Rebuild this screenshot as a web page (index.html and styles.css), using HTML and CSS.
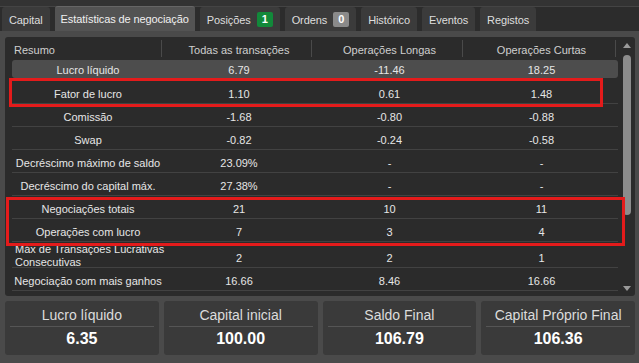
FILE: index.html
```html
<!DOCTYPE html>
<html lang="pt">
<head>
  <meta charset="UTF-8" />
  <title>Relatório – Estatísticas de negociação</title>
  <meta name="viewport" content="width=device-width, initial-scale=1" />
  <link rel="stylesheet" href="styles.css">
</head>
<body>
  <div class="topbar"></div>

  <nav class="tabs">
    <div class="tab">Capital</div>
    <div class="tab active">Estatísticas de negociação</div>
    <div class="tab">Posições <span class="badge green">1</span></div>
    <div class="tab">Ordens <span class="badge gray">0</span></div>
    <div class="tab">Histórico</div>
    <div class="tab">Eventos</div>
    <div class="tab">Registos</div>
  </nav>

  <main class="content">
    <section class="panel">
      <div class="table">
        <div class="row head">
          <div class="cell left">Resumo</div>
          <div class="cell">Todas as transações</div>
          <div class="cell">Operações Longas</div>
          <div class="cell">Operações Curtas</div>
        </div>
        <div class="row hl">
          <div class="cell">Lucro líquido</div><div class="cell">6.79</div><div class="cell">-11.46</div><div class="cell">18.25</div>
        </div>
        <div class="row">
          <div class="cell">Fator de lucro</div><div class="cell">1.10</div><div class="cell">0.61</div><div class="cell">1.48</div>
        </div>
        <div class="row">
          <div class="cell">Comissão</div><div class="cell">-1.68</div><div class="cell">-0.80</div><div class="cell">-0.88</div>
        </div>
        <div class="row">
          <div class="cell">Swap</div><div class="cell">-0.82</div><div class="cell">-0.24</div><div class="cell">-0.58</div>
        </div>
        <div class="row">
          <div class="cell">Decréscimo máximo de saldo</div><div class="cell">23.09%</div><div class="cell">-</div><div class="cell">-</div>
        </div>
        <div class="row">
          <div class="cell">Decréscimo do capital máx.</div><div class="cell">27.38%</div><div class="cell">-</div><div class="cell">-</div>
        </div>
        <div class="row">
          <div class="cell">Negociações totais</div><div class="cell">21</div><div class="cell">10</div><div class="cell">11</div>
        </div>
        <div class="row">
          <div class="cell">Operações com lucro</div><div class="cell">7</div><div class="cell">3</div><div class="cell">4</div>
        </div>
        <div class="row tall">
          <div class="cell left">Máx de Transações Lucrativas Consecutivas</div><div class="cell">2</div><div class="cell">2</div><div class="cell">1</div>
        </div>
        <div class="row">
          <div class="cell">Negociação com mais ganhos</div><div class="cell">16.66</div><div class="cell">8.46</div><div class="cell">16.66</div>
        </div>
      </div>

      <div class="scrollbar">
        <span class="arrow up"></span>
        <span class="thumb"></span>
        <span class="arrow down"></span>
      </div>

      <!-- marcações a vermelho -->
      <div class="mark mark-a"></div>
      <div class="mark mark-b"></div>
    </section>

    <section class="cards">
      <div class="card"><span class="label">Lucro líquido</span><strong>6.35</strong></div>
      <div class="card"><span class="label">Capital inicial</span><strong>100.00</strong></div>
      <div class="card"><span class="label">Saldo Final</span><strong>106.79</strong></div>
      <div class="card"><span class="label">Capital Próprio Final</span><strong>106.36</strong></div>
    </section>
  </main>
</body>
</html>
```

FILE: styles.css
```css
body {
  font-family: 'Liberation Sans', Arial, sans-serif;
  margin: 0;
  background: #4a4a4a;
  color: #e6e6e6;
  width: 639px;
  height: 363px;
  overflow: hidden;
}
.topbar {
  height: 6px;
  background: #333;
  border-bottom: 1px solid #444;
}
.tabs {
  display: flex;
  gap: 5px;
  height: 24px;
  padding-left: 2px;
  background: #2c2c2c;
  align-items: flex-end;
}
.tab {
  display: flex;
  align-items: center;
  gap: 6px;
  height: 24px;
  padding: 1px 7px 0;
  background: #3b3b3b;
  border-radius: 3px 3px 0 0;
  font-size: 11px;
  letter-spacing: -0.1px;
  color: #dedede;
  box-sizing: border-box;
}
.tab.active {
  background: #535353;
  height: 25px;
  border-top: 1px solid #666;
  padding: 0 6px;
  color: #f0f0f0;
}
.badge {
  display: inline-block;
  width: 16px;
  height: 15px;
  line-height: 15px;
  text-align: center;
  border-radius: 2px;
  font-size: 11px;
  font-weight: bold;
  color: #fff;
}
.badge.green {
  background: #12893a;
}
.badge.gray {
  background: #8a8a8a;
}
.content {
  padding: 6px 4px 0 5px;
}
.panel {
  position: relative;
  display: flex;
  height: 259px;
  background: #2b2b2b;
  border-radius: 3px;
  padding-left: 7px;
  box-sizing: border-box;
}
.table {
  width: 606px;
}
.row {
  display: grid;
  grid-template-columns: 152px 150px 151px 153px;
  height: 23px;
  align-items: center;
  border-bottom: 1px solid #424242;
  box-sizing: border-box;
  font-size: 11px;
}
.row.head {
  height: 21px;
  margin-bottom: 2px;
  border-bottom: none;
  color: #cfcfcf;
}
.row.head .cell {
  position: relative;
}
.row.head .cell + .cell::before {
  content: '';
  position: absolute;
  left: -3px;
  top: 0;
  height: 17px;
  border-left: 1px solid #4a4a4a;
}
.row.head .cell:last-child::after {
  content: '';
  position: absolute;
  right: 2px;
  top: 0;
  height: 17px;
  border-left: 1px solid #4a4a4a;
}
.row.hl {
  height: 18px;
  margin: 2px 0 3px;
  background: #4d4d4d;
  border-radius: 3px;
  border-bottom: none;
}
.row.hl .cell {
  padding-top: 2px;
}
.row.tall {
  height: 26px;
}
.cell {
  text-align: center;
  white-space: nowrap;
  padding-top: 4px;
}
.cell.left {
  text-align: left;
  padding-left: 2px;
}
.row.tall .cell.left {
  align-self: start;
  white-space: normal;
  line-height: 13px;
  padding: 1px 0 0 3px;
  width: 150px;
}
.scrollbar {
  width: 17px;
  display: flex;
  flex-direction: column;
  align-items: center;
  padding: 6px 0 5px;
  box-sizing: border-box;
}
.arrow {
  width: 0;
  height: 0;
  border-left: 4px solid transparent;
  border-right: 4px solid transparent;
}
.arrow.up {
  border-bottom: 5px solid #9a9a9a;
}
.arrow.down {
  border-top: 5px solid #9a9a9a;
  margin-top: auto;
}
.thumb {
  width: 8px;
  height: 160px;
  margin-top: 7px;
  background: #8c8c8c;
  border-radius: 4px;
}
.mark {
  position: absolute;
  border: 3px solid #e41b1b;
  box-sizing: border-box;
}
.mark-a {
  left: 4px;
  top: 41px;
  width: 594px;
  height: 29px;
}
.mark-b {
  left: 1px;
  top: 160px;
  width: 619px;
  height: 49px;
}
.cards {
  display: flex;
  gap: 5px;
  margin-top: 5px;
}
.card {
  flex: 1;
  height: 54px;
  background: #3a3a3a;
  border-radius: 3px;
  display: flex;
  flex-direction: column;
  align-items: center;
  padding: 6px 5px 0;
  box-sizing: border-box;
}
.card .label {
  width: 100%;
  text-align: center;
  font-size: 14px;
  color: #dcdcdc;
  padding-bottom: 3px;
  border-bottom: 1px solid #555;
}
.card strong {
  font-size: 16px;
  color: #fff;
  margin-top: 3px;
}
```
